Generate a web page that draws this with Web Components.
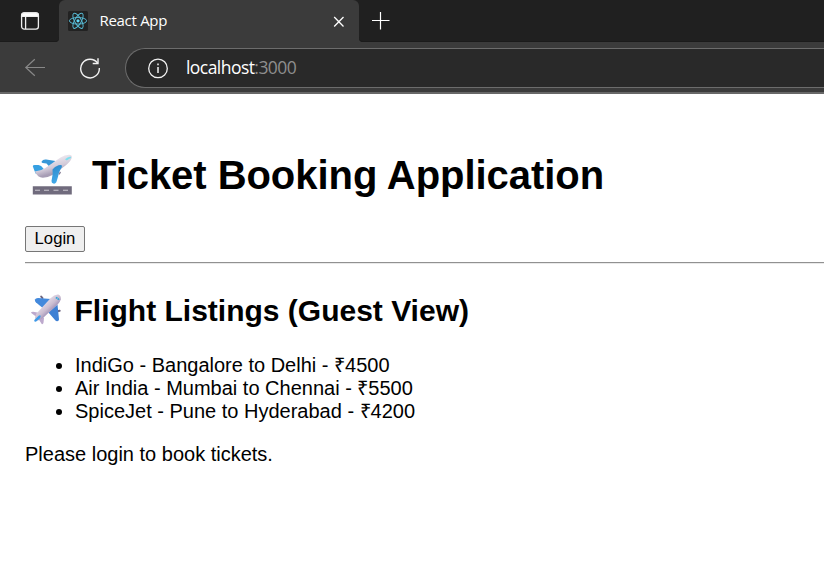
<!DOCTYPE html>
<html lang="en"><head><meta charset="utf-8"><title>React App</title>
<style>html,body{margin:0;height:100%;overflow:hidden;background:#fff}</style></head>
<body><browser-window></browser-window>
<script>
const define=(name,html)=>customElements.define(name,class extends HTMLElement{
  constructor(){super();this.attachShadow({mode:'open'}).innerHTML=html;}
});

define('tab-strip',`<style>
:host{display:flex;height:42px;background:#202020;color:#fff;font-family:"Noto Sans",sans-serif}
.ws{width:59px;height:42px;background:#202020;border-radius:0 0 4px 0;flex:none}
.ws svg{display:block;margin:11px 0 0 20px}
.tab{width:300px;background:#3b3b3b;border-radius:6px 6px 0 0;display:flex;box-sizing:border-box;padding:11px 0 0 9px;flex:none}
.under{background:linear-gradient(#202020 50%,#3b3b3b 50%);display:flex;flex:1}
.new{flex:1;background:#202020;border-radius:0 0 0 4px;padding:12px 0 0 12px}
.ws,.new{box-shadow:inset 0 -1px #1b1b1b}
.t{margin:-1px 0 0 11.5px;width:158.5px;font:15px/20px "Open Sans",sans-serif;letter-spacing:-.3px;white-space:nowrap}
svg{display:block;flex:none}
.x{margin:5px 0 0 75px}
</style><div class="under"><div class="ws"><svg width="20" height="20" viewBox="0 0 20 20" fill="none" stroke="#eee" stroke-width="1.3"><rect x="1.6" y="1.9" width="16.8" height="16.2" rx="2.6"/><path d="M1.6 5.4V4.5q0-2.6 2.6-2.6h11.6q2.6 0 2.6 2.6v.9z" fill="#fff"/><path d="M5.6 5.4V18"/></svg></div>
<div class="tab"><svg width="20" height="20" viewBox="0 0 20 20"><rect width="20" height="20" rx="1.5" fill="#222"/><g fill="none" stroke="#57bcd6" stroke-width=".95"><ellipse cx="10" cy="9.8" rx="8.6" ry="3.3"/><ellipse cx="10" cy="9.8" rx="8.6" ry="3.3" transform="rotate(60 10 9.8)"/><ellipse cx="10" cy="9.8" rx="8.6" ry="3.3" transform="rotate(120 10 9.8)"/></g><circle cx="10" cy="9.8" r="1.6" fill="#61dafb"/></svg>
<span class="t">React App</span><svg class="x" width="12" height="12" viewBox="0 0 12 12" stroke="#fff" stroke-width="1.3"><path d="M1.2 1L10.5 10.5M10.5 1L1.2 10.5"/></svg></div>
<div class="new"><svg width="20" height="18" viewBox="0 0 20 18" stroke="#fff" stroke-width="1.2"><path d="M1 8.5h17.5M9.5 0v17.5"/></svg></div></div>`);

define('address-bar',`<style>
:host{display:flex;height:52px;box-sizing:border-box;background:#3b3b3b;border-bottom:2px solid #686868;padding-top:6px}
.nav{width:125px;flex:none;display:flex}
.back{margin:9px 0 0 24px}.rel{margin:9px 0 0 33px}
.pill{flex:1;height:40px;box-sizing:border-box;border:1px solid #6c6c6c;border-right:0;border-radius:20px 0 0 20px;background:#292929;display:flex;padding-left:22px}
.pill svg{margin-top:9px;flex:none}
span{font:17.5px/38px "Open Sans",sans-serif;letter-spacing:-.55px;color:#fff;margin:-1px 0 0 17px;white-space:nowrap}
b{font-weight:400;color:#8e8e8e}
</style><div class="nav"><svg class="back" width="22" height="22" viewBox="0 0 22 22" fill="none" stroke="#888" stroke-width="1.2"><path d="M21 10.5H1.8M10.8 2.2L1.8 10.5l9 8.3"/></svg>
<svg class="rel" width="22" height="22" viewBox="0 0 22 22" fill="none" stroke="#f2f2f2" stroke-width="1.4"><path d="M18.6 6.2A9.3 9.3 0 1 0 20.3 11"/><path d="M19 1.2v5.3h-5.3"/></svg></div>
<div class="pill"><svg width="21" height="21" viewBox="0 0 21 21" fill="none" stroke="#f2f2f2" stroke-width="1.3"><circle cx="10" cy="10.4" r="9.3"/><path d="M10 9v6M10 5.6v1.7" stroke-width="1.5"/></svg><span>localhost<b>:3000</b></span></div>`);

define('departure-icon',`<style>:host{display:block;width:42px;height:42px;flex:none}svg{display:block}</style>
<svg width="42" height="42" viewBox="0 0 42 42"><defs><linearGradient id="f" x1=".4" y1=".25" x2=".62" y2=".75"><stop stop-color="#e9e3ec"/><stop offset=".55" stop-color="#d3cbd9"/><stop offset="1" stop-color="#a79db5"/></linearGradient><linearGradient id="w" x2=".3" y2="1"><stop stop-color="#2a86c8"/><stop offset="1" stop-color="#42aaea"/></linearGradient></defs>
<path d="M9.6 7.5q1.2-2.4 4.6-2l9.3 1.6-5.8 6-3.2-3.6-3.8-.5q-1.4-.4-1.1-1.5z" fill="#3697d8"/>
<path d="M.8 12.2Q.8 11 2.8 11l3.7.1q2.6.2 5.3 4L4 20q-1-1.6-3.2-7.800z" fill="#36a0e2"/>
<path d="M2.8 17.600Q9 17 13 14.300L28.500 3.600Q33 .6 37.200.7q3 .2 2.700 2.800-.5 3-6 7.800-6.500 5-13.500 9.600-5 2.800-9.400 2.900Q6 24 2.800 17.600z" fill="url(#f)"/>
<path d="M20.500 15.500q2-3 6-4.300 3-.8 3.500.5.3 1.300-1.800 4.300-1.200 2.300-2 6-.8 3-1.900 6.300-1.200 1.800-3 1.200-1.800-.6-1.800-2.600.7-3.300 1.200-7.400z" fill="url(#w)"/>
<path d="M33 5.200q2.500-2 5.500-2.600l.7 1.500q-2.300.5-4.400 2.500z" fill="#7de0ef"/>
<path d="M28 17.500l1 1-1.500 2.200-1-.5z" fill="#7f768f"/>
<path d="M.8 32.200h39v8.400h-39z" fill="#706b7d"/><path d="M3 36.200h5M12 36.200h5M21.500 36.200h5M31 36.200h5" stroke="#c9c6ce" stroke-width="1.1"/></svg>`);

define('plane-icon',`<style>:host{display:block;width:32px;height:32px;flex:none}svg{display:block}</style>
<svg width="32" height="32" viewBox="0 0 32 32"><defs><linearGradient id="f" x1=".35" y1=".35" x2=".6" y2=".62"><stop stop-color="#e0d6e4"/><stop offset=".6" stop-color="#cbbdd1"/><stop offset="1" stop-color="#aa9bbd"/></linearGradient></defs>
<path d="M11.200 2.600l1.300 1.500M27.500 17.300l2.200-.6" stroke="#6d6580" stroke-width="2" stroke-linecap="round"/>
<path d="M5 5.500Q5.500 4 8 3.900L21 5l-8.300 9L5.800 8.300Q4.500 7 5 5.500z" fill="#4389dc"/>
<path d="M18.500 18.500L27.500 10.500l1.500 15q-.2 1.600-1.700 1.800-1.500 0-2.300-1.200z" fill="#3f80d4"/>
<path d="M.9 18.800q.7-1.200 2.300-1.100l5.300 1 5.500 5.300-.5 4.800q-.3 1.600-1.800 1.300L8 24z" fill="#bda9cd"/>
<path d="M6.500 19.500L20.500 4.200Q24.500.2 28.300.6q3 1.200 2.500 4.900-.6 2.200-3 4.700L13.500 23.500Q9 27 6.300 26.300q-2.600-1.600.2-6.800z" fill="url(#f)"/>
<path d="M4.300 26l4.400-4.300q1.400-1 2 .1.200 1.200-1 2.600l-3.500 3.200q-2.500.6-1.900-1.600z" fill="#3e9ae8"/>
<path d="M25.800 3.600q2.200.4 3.200 2.600" stroke="#35a7d8" stroke-width="1.700" stroke-dasharray="1.7 .4" fill="none"/></svg>`);

define('login-button',`<style>:host{display:block;height:26px}
button{display:block;width:60px;height:26px;box-sizing:border-box;padding:0 0 1px;border:1px solid #767676;border-radius:2px;background:#efefef;color:#000;font:16.67px/22px "Liberation Sans",Arial,sans-serif}</style><button><slot></slot></button>`);

define('flight-list',`<style>:host{display:block;margin-top:26px}ul{margin:0;padding:0 0 0 50px;font-size:20px;line-height:23px}</style>
<ul><li>IndiGo - Bangalore to Delhi - ₹4500</li><li>Air India - Mumbai to Chennai - ₹5500</li><li>SpiceJet - Pune to Hyderabad - ₹4200</li></ul>`);

define('booking-page',`<style>
:host{display:block;padding:58px 0 0 25px;color:#000;background:#fff;font:20px/23px "Liberation Sans",Arial,sans-serif}
h1,h2{margin:0;display:flex;white-space:nowrap}
h1{font-size:40px;line-height:46px;height:46px;letter-spacing:-.05px}h2{font-size:30px;line-height:34px;height:34px;margin-top:30px}
departure-icon{margin:2px 18px 0 7px}plane-icon{margin:0 12.500px 0 5px}
login-button{margin-top:28px}
.rule{height:2px;margin-top:10px;box-sizing:border-box;border-top:1px solid #919191;border-bottom:1px solid #e9e9e9}
p{margin:20px 0 0}
</style><h1><departure-icon></departure-icon><span>Ticket Booking Application</span></h1>
<login-button>Login</login-button><div class="rule"></div>
<h2><plane-icon></plane-icon><span>Flight Listings (Guest View)</span></h2>
<flight-list></flight-list><p>Please login to book tickets.</p>`);

define('browser-window',`<style>:host{display:block;width:100%;height:100%;overflow:hidden}</style><tab-strip></tab-strip><address-bar></address-bar><booking-page></booking-page>`);
</script></body></html>
